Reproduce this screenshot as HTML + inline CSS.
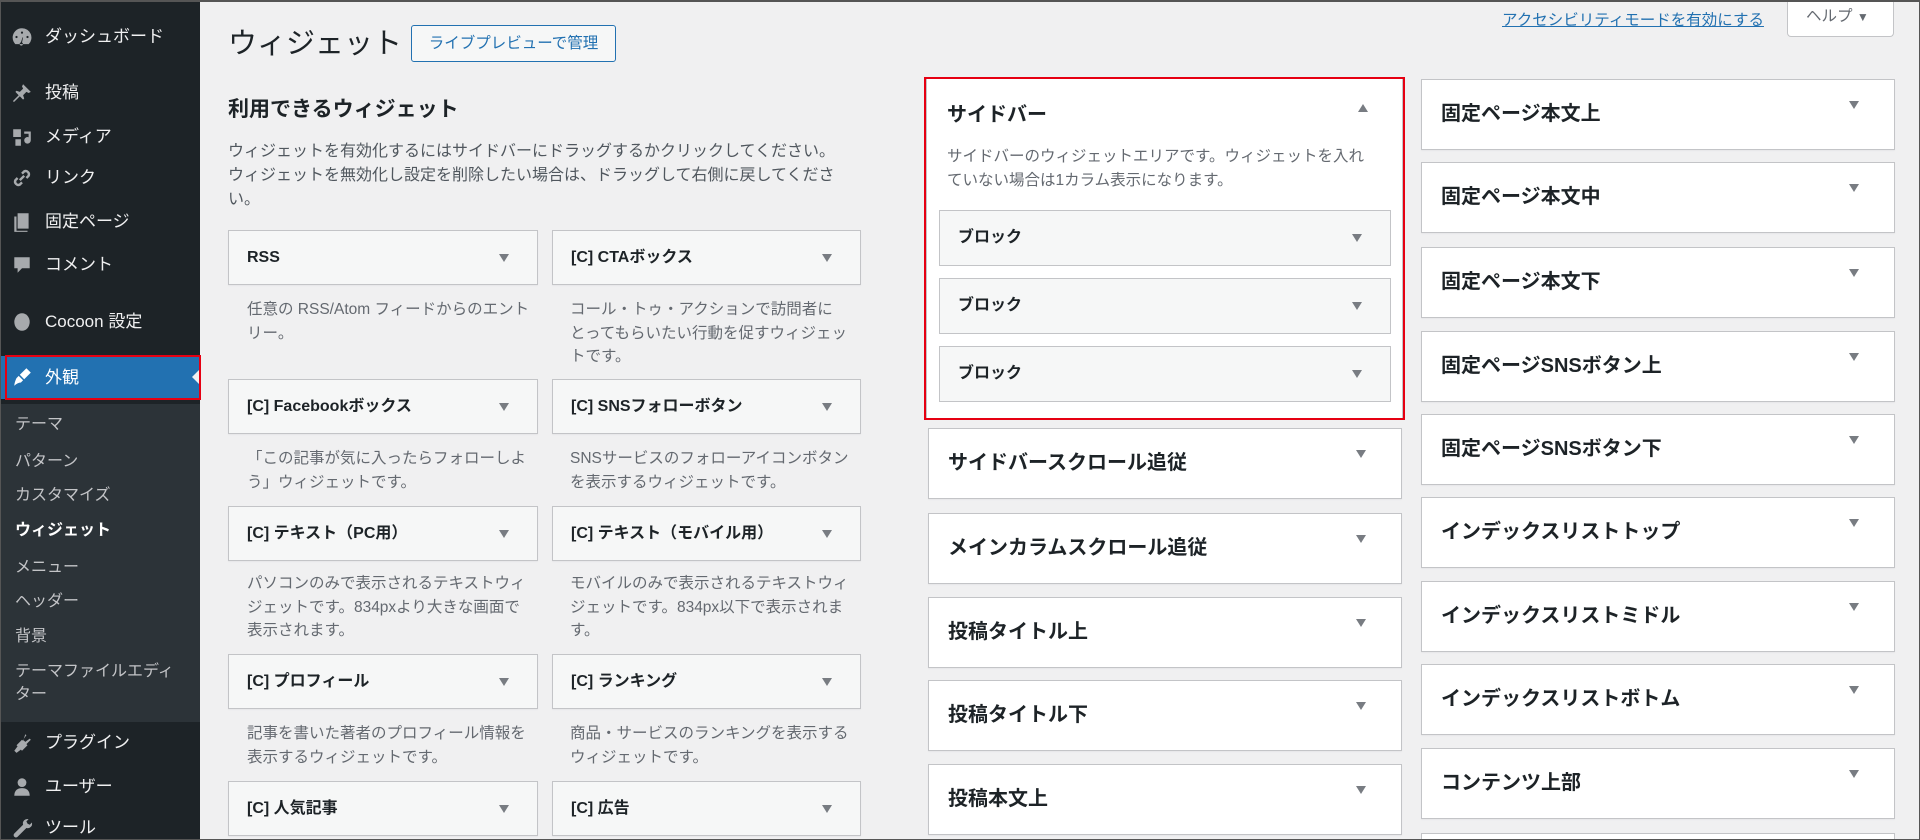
<!DOCTYPE html>
<html><head><meta charset="utf-8"><style>
*{box-sizing:border-box;margin:0;padding:0}
html{width:1920px;height:840px;overflow:hidden}
body{width:1920px;height:840px;overflow:hidden;background:#f0f0f1;font-family:"Liberation Sans","Noto Sans CJK JP",sans-serif;color:#1d2327;position:relative}
.abs{position:absolute}
#side{left:0;top:0;width:200px;height:840px;background:#1d2327}
.mi{position:absolute;left:0;width:200px;height:40px;color:#f0f0f1;font-size:17px;line-height:40px;padding-left:45px}
.mi svg{position:absolute;left:11px;top:9px;width:22px;height:22px;fill:#a7aaad}
.sub{position:absolute;left:15px;color:#c3c4c7;font-size:16px;line-height:24px}
.wb{position:absolute;background:#f6f7f7;border:1px solid #c3c4c7;height:55px;font-weight:bold;font-size:16px;line-height:53px;padding-left:18px;box-shadow:0 1px 1px rgba(0,0,0,.04)}
.arr{position:absolute;right:28px;top:50%;margin-top:-4px;width:0;height:0;border-left:5px solid transparent;border-right:5px solid transparent;border-top:8px solid #787c82}
.wd{position:absolute;color:#646970;font-size:15.5px;line-height:23.5px;width:286px}
.sb{position:absolute;background:#fff;border:1px solid #c3c4c7;height:71px;font-weight:bold;font-size:20px;line-height:69px;padding-left:19px;box-shadow:0 1px 1px rgba(0,0,0,.04)}
.sb .arr{right:35px;margin-top:-14px}
.blk{position:absolute;left:939px;width:452px;height:56px;background:#f6f7f7;border:1px solid #c3c4c7;font-weight:bold;font-size:16px;line-height:54px;padding-left:18px}
.blk .arr{right:28px}
</style></head><body>
<div id="side" class="abs">
 <div class="mi" style="top:17px"><svg viewBox="0 0 20 20"><path d="M10 2a8.5 8.5 0 0 0-8.5 8.5c0 2.3.9 4.4 2.4 6h12.2a8.5 8.5 0 0 0-6.1-14.5zm0 3a1 1 0 1 1 0 2 1 1 0 0 1 0-2zM5 9a1 1 0 1 1 0 2 1 1 0 0 1 0-2zm10 0a1 1 0 1 1 0 2 1 1 0 0 1 0-2zm-4 1.5-1 4.5a1.5 1.5 0 1 1-1-.1l1.5-4.6z"/></svg>ダッシュボード</div>
 <div class="mi" style="top:73px"><svg viewBox="0 0 20 20"><path d="M11 2l7 7-2 1-2-1-3 3 1 3-1 1-3-3-5 5-1 0 0-1 5-5-3-3 1-1 3 1 3-3-1-2z"/></svg>投稿</div>
 <div class="mi" style="top:117px"><svg viewBox="0 0 20 20"><path d="M2 3h7v7H2zM12 5h6v8a3 3 0 1 1-2-2.8V7h-4zM4 12h5v6H4z"/></svg>メディア</div>
 <div class="mi" style="top:158px"><svg viewBox="0 0 20 20"><path d="M8 12l4-4M6 10l-2 2a3 3 0 0 0 4 4l2-2M14 10l2-2a3 3 0 0 0-4-4l-2 2" stroke="#a7aaad" stroke-width="2.2" fill="none"/></svg>リンク</div>
 <div class="mi" style="top:202px"><svg viewBox="0 0 20 20"><path d="M6 2h10v14H6zM3 5h2v13h10v1H3z"/></svg>固定ページ</div>
 <div class="mi" style="top:245px"><svg viewBox="0 0 20 20"><path d="M3 3h14v10h-7l-4 4v-4H3z"/></svg>コメント</div>
 <div class="mi" style="top:302px"><svg viewBox="0 0 20 20"><ellipse cx="10" cy="10" rx="7" ry="8"/></svg>Cocoon 設定</div>
 <div class="mi" style="top:356px;height:43px;background:#2271b1;line-height:43px;color:#fff"><svg viewBox="0 0 20 20" style="fill:#fff;top:10px"><path d="M14 2l4 4-6 6-4-4zM7 9l4 4-2 2c-2 0-4 1-6 3 0-2 1-5 2-7z"/></svg>外観<div class="abs" style="right:0;top:13px;border-top:8px solid transparent;border-bottom:8px solid transparent;border-right:8px solid #f0f0f1"></div></div>
 <div class="abs" style="left:5px;top:355px;width:196px;height:45px;border:2px solid #e60012"></div>
 <div class="abs" style="left:0;top:404px;width:200px;height:318px;background:#2c3338"></div>
 <div class="sub" style="top:413px">テーマ</div>
 <div class="sub" style="top:450px">パターン</div>
 <div class="sub" style="top:484px">カスタマイズ</div>
 <div class="sub" style="top:519px;color:#fff;font-weight:bold">ウィジェット</div>
 <div class="sub" style="top:556px">メニュー</div>
 <div class="sub" style="top:590px">ヘッダー</div>
 <div class="sub" style="top:625px">背景</div>
 <div class="sub" style="top:660px;width:170px;line-height:23px">テーマファイルエディター</div>
 <div class="mi" style="top:723px"><svg viewBox="0 0 20 20"><path d="M13 2l1 1-3 4 2 2 4-3 1 1-4 4 1 1-5 5-1-1-4 3-2-2 3-4-1-1 5-5 1 1z"/></svg>プラグイン</div>
 <div class="mi" style="top:767px"><svg viewBox="0 0 20 20"><circle cx="10" cy="6" r="4"/><path d="M3 18c0-5 3-7 7-7s7 2 7 7z"/></svg>ユーザー</div>
 <div class="mi" style="top:808px"><svg viewBox="0 0 20 20"><path d="M16 2a4 4 0 0 0-5 5L3 15a2 2 0 0 0 3 3l8-8a4 4 0 0 0 5-5l-2 2-2-1-1-2z"/></svg>ツール</div>
</div>

<div class="abs" style="left:228px;top:24px;font-size:29px;line-height:40px;color:#1d2327">ウィジェット</div>
<div class="abs" style="left:411px;top:25px;width:205px;height:37px;border:1px solid #2271b1;border-radius:3px;color:#2271b1;font-size:15.5px;line-height:35px;text-align:center;background:#f6f7f7">ライブプレビューで管理</div>
<div class="abs" style="left:1502px;top:8px;font-size:15.5px;color:#2271b1;text-decoration:underline">アクセシビリティモードを有効にする</div>
<div class="abs" style="left:1787px;top:0;width:107px;height:37px;background:#fff;border:1px solid #c3c4c7;border-top:none;border-radius:0 0 4px 4px;font-size:15.5px;color:#646970;line-height:34px;padding-left:18px">ヘルプ <span style="font-size:12px">▼</span></div>

<div class="abs" style="left:228px;top:96px;font-size:21px;font-weight:bold;line-height:28px">利用できるウィジェット</div>
<div class="abs" style="left:228px;top:140px;width:660px;font-size:16px;line-height:24px;color:#50575e">ウィジェットを有効化するにはサイドバーにドラッグするかクリックしてください。<br>ウィジェットを無効化し設定を削除したい場合は、ドラッグして右側に戻してくださ<br>い。</div>

<div class="wb" style="left:228px;top:230px;width:310px">RSS<div class="arr"></div></div>
<div class="wb" style="left:552px;top:230px;width:309px">[C] CTAボックス<div class="arr"></div></div>
<div class="wd" style="left:247px;top:298px">任意の RSS/Atom フィードからのエントリー。</div>
<div class="wd" style="left:570px;top:298px">コール・トゥ・アクションで訪問者に<br>とってもらいたい行動を促すウィジェットです。</div>

<div class="wb" style="left:228px;top:379px;width:310px">[C] Facebookボックス<div class="arr"></div></div>
<div class="wb" style="left:552px;top:379px;width:309px">[C] SNSフォローボタン<div class="arr"></div></div>
<div class="wd" style="left:247px;top:447px">「この記事が気に入ったらフォローしよう」ウィジェットです。</div>
<div class="wd" style="left:570px;top:447px">SNSサービスのフォローアイコンボタンを表示するウィジェットです。</div>

<div class="wb" style="left:228px;top:506px;width:310px">[C] テキスト（PC用）<div class="arr"></div></div>
<div class="wb" style="left:552px;top:506px;width:309px">[C] テキスト（モバイル用）<div class="arr"></div></div>
<div class="wd" style="left:247px;top:572px">パソコンのみで表示されるテキストウィジェットです。834pxより大きな画面で<br>表示されます。</div>
<div class="wd" style="left:570px;top:572px">モバイルのみで表示されるテキストウィジェットです。834px以下で表示されます。</div>

<div class="wb" style="left:228px;top:654px;width:310px">[C] プロフィール<div class="arr"></div></div>
<div class="wb" style="left:552px;top:654px;width:309px">[C] ランキング<div class="arr"></div></div>
<div class="wd" style="left:247px;top:722px">記事を書いた著者のプロフィール情報を<br>表示するウィジェットです。</div>
<div class="wd" style="left:570px;top:722px">商品・サービスのランキングを表示する<br>ウィジェットです。</div>

<div class="wb" style="left:228px;top:781px;width:310px">[C] 人気記事<div class="arr"></div></div>
<div class="wb" style="left:552px;top:781px;width:309px">[C] 広告<div class="arr"></div></div>

<div class="abs" style="left:926px;top:78px;width:477px;height:341px;background:#fff;border:1px solid #c3c4c7"></div>
<div class="abs" style="left:947px;top:100px;font-size:20px;font-weight:bold;line-height:30px">サイドバー</div>
<div class="abs" style="left:1358px;top:104px;border-left:5px solid transparent;border-right:5px solid transparent;border-bottom:8px solid #787c82"></div>
<div class="abs" style="left:947px;top:145px;width:428px;font-size:15.5px;line-height:24px;color:#646970">サイドバーのウィジェットエリアです。ウィジェットを入れていない場合は1カラム表示になります。</div>
<div class="blk" style="top:210px">ブロック<div class="arr"></div></div>
<div class="blk" style="top:278px">ブロック<div class="arr"></div></div>
<div class="blk" style="top:346px">ブロック<div class="arr"></div></div>
<div class="abs" style="left:924px;top:77px;width:481px;height:343px;border:2px solid #e60012"></div>

<div class="sb" style="left:928px;top:428px;width:474px">サイドバースクロール追従<div class="arr"></div></div>
<div class="sb" style="left:928px;top:513px;width:474px">メインカラムスクロール追従<div class="arr"></div></div>
<div class="sb" style="left:928px;top:597px;width:474px">投稿タイトル上<div class="arr"></div></div>
<div class="sb" style="left:928px;top:680px;width:474px">投稿タイトル下<div class="arr"></div></div>
<div class="sb" style="left:928px;top:764px;width:474px">投稿本文上<div class="arr"></div></div>

<div class="sb" style="left:1421px;top:79px;width:474px">固定ページ本文上<div class="arr"></div></div>
<div class="sb" style="left:1421px;top:162px;width:474px">固定ページ本文中<div class="arr"></div></div>
<div class="sb" style="left:1421px;top:247px;width:474px">固定ページ本文下<div class="arr"></div></div>
<div class="sb" style="left:1421px;top:331px;width:474px">固定ページSNSボタン上<div class="arr"></div></div>
<div class="sb" style="left:1421px;top:414px;width:474px">固定ページSNSボタン下<div class="arr"></div></div>
<div class="sb" style="left:1421px;top:497px;width:474px">インデックスリストトップ<div class="arr"></div></div>
<div class="sb" style="left:1421px;top:581px;width:474px">インデックスリストミドル<div class="arr"></div></div>
<div class="sb" style="left:1421px;top:664px;width:474px">インデックスリストボトム<div class="arr"></div></div>
<div class="sb" style="left:1421px;top:748px;width:474px">コンテンツ上部<div class="arr"></div></div>
<div class="abs" style="left:1421px;top:833px;width:474px;height:7px;background:#fff;border:1px solid #c3c4c7;border-bottom:none"></div>

<div class="abs" style="left:0;top:0;width:1920px;height:840px;border:1px solid #555;border-top-width:2px;pointer-events:none"></div>
</body></html>
